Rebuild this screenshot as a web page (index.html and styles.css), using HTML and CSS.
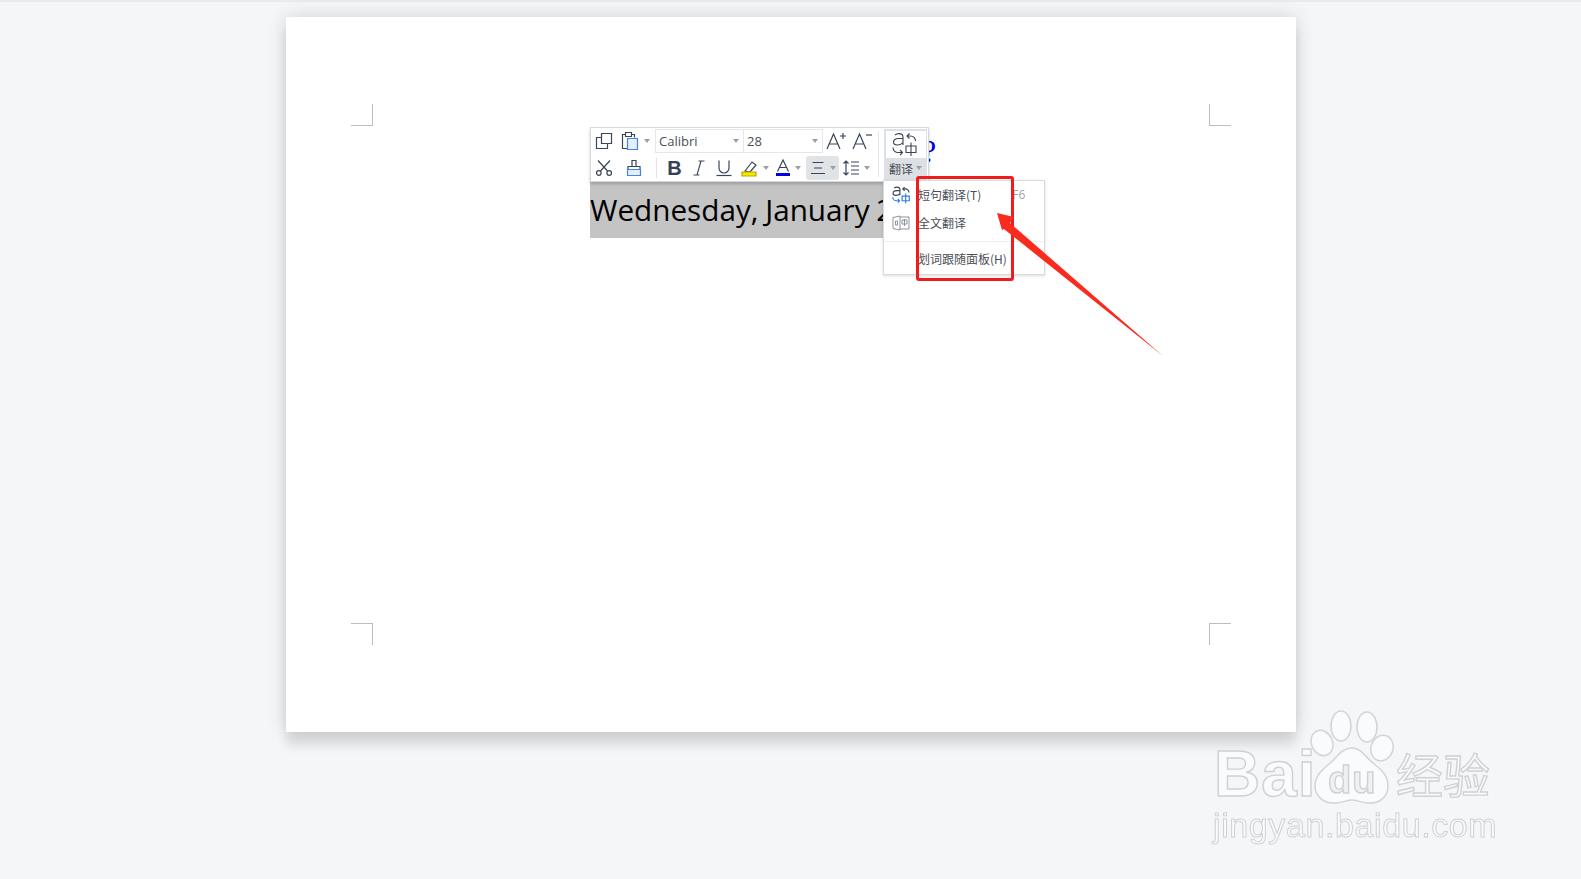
FILE: index.html
```html
<!DOCTYPE html>
<html lang="zh-CN">
<head>
<meta charset="utf-8">
<title>翻译</title>
<link rel="stylesheet" href="styles.css">
</head>
<body>
<div class="topline"></div>
<main class="workspace">
  <section class="sheet">
    <i class="crop crop-tl"></i><i class="crop crop-tr"></i><i class="crop crop-bl"></i><i class="crop crop-br"></i>
    <div class="selection">Wednesday, January 2</div>
    <span class="stray">?</span>

    <div class="toolbar">
      <div class="tools">
        <div class="row">
          <button class="tool w26"><svg width="18" height="18" viewBox="0 0 18 18" class="ic"><path d="M6.500 1.500h10v10h-10z"/><path d="M6.500 5.500h-5v11h11v-5"/></svg></button>
          <button class="tool w35"><svg width="20" height="20" viewBox="0 0 20 20" class="ic"><path d="M5.500 3.500h-3v14h5"/><path d="M5.500 1.500h6v4h-6zM11.500 3.500h3v3"/><path class="blue" d="M7.500 7.500h10v11h-10z"/></svg><b class="caret"></b></button>
          <div class="combo">
            <span class="combo-font">Calibri<b class="caret"></b></span>
            <span class="combo-size">28<b class="caret"></b></span>
          </div>
          <button class="tool w26"><svg width="24" height="20" viewBox="0 0 24 20" class="ic"><path d="M3 18 9.500 3l6.500 15M5.500 13h8"/><path d="M16 5h6M19 2v6"/></svg></button>
          <button class="tool w25"><svg width="24" height="20" viewBox="0 0 24 20" class="ic"><path d="M3 18 9.500 3l6.500 15M5.500 13h8"/><path d="M16 4h6"/></svg></button>
        </div>
        <div class="row row2">
          <button class="tool w26"><svg width="18" height="18" viewBox="0 0 18 18" class="ic"><path d="M3 1.500 12.500 12M15 1.500 5.500 12"/><circle cx="3.800" cy="14" r="2.300"/><circle cx="14.200" cy="14" r="2.300"/></svg></button>
          <button class="tool w34"><svg width="16" height="18" viewBox="0 0 16 18" class="ic"><path d="M6 1.500h4v6H6zM2 7.500h12v3H2z"/><path class="blue" d="M1.500 10.500h13v6h-13z"/></svg></button>
          <i class="vsep"></i>
          <button class="tool w29 bold">B</button>
          <button class="tool w20"><svg width="12" height="16" viewBox="0 0 12 16" class="ic thin"><path d="M4 15 8 1M5.500 1h6M.500 15h6"/></svg></button>
          <button class="tool w30"><svg width="18" height="18" viewBox="0 0 18 18" class="ic"><path d="M4 1.500V9a5 5 0 0 0 10 0V1.500"/><path d="M1.500 16.500h15"/></svg></button>
          <button class="tool w32"><svg width="18" height="18" viewBox="0 0 18 18" class="ic"><path d="M4 12 11 3l4 3-6 7z"/><path class="mark" d="M1 13h14v4H1z"/></svg><b class="caret"></b></button>
          <button class="tool w33"><svg width="16" height="18" viewBox="0 0 16 18" class="ic"><path d="M2.500 12.500 8 1l5.500 11.500M4.500 8.500h7"/><path class="bar" d="M1 14h14v3H1z"/></svg><b class="caret"></b></button>
          <button class="tool w33 active"><svg width="16" height="14" viewBox="0 0 16 14" class="ic"><path d="M2.500 1.500h11M4 7h8M1 12.500h14"/></svg><b class="caret"></b></button>
          <button class="tool w33"><svg width="18" height="18" viewBox="0 0 18 18" class="ic"><path d="M4 2v14M1.500 4.500 4 2l2.500 2.500M1.500 13.500 4 16l2.500-2.500M9 3h8M9 7h8M9 11h8M9 15h8"/></svg><b class="caret"></b></button>
        </div>
      </div>
      <i class="hsep"></i>
      <div class="translate">
        <span class="translate-icon"><svg width="25" height="25" viewBox="0 0 25 25" class="ic thin"><path d="M3 3C4 2 5.500 1.600 7 1.600c2.500 0 4 1.300 4 3.600V13M11 6.500H6.500C3.500 6.500 1.500 7.800 1.500 10s1.800 3 4 3c2 0 4-.700 5.500-2.500"/><path d="M23.500 9a5 5 0 0 0-5-5H15M17.500 1.500 15 4l2.500 2.500"/><path d="M1 15.500a5 5 0 0 0 5 5h4M8 18l2.500 2.500L8 23"/><path d="M14 14h10v6.500H14zM19 10.500V24"/></svg></span>
        <span class="translate-label">翻译<b class="caret"></b></span>
      </div>
    </div>

    <div class="menu">
      <div class="item"><span class="item-ic"><svg width="18" height="18" viewBox="0 0 25 25" class="ic han"><path d="M3 3C4 2 5.500 1.600 7 1.600c2.500 0 4 1.300 4 3.600V13M11 6.500H6.500C3.500 6.500 1.500 7.800 1.500 10s1.800 3 4 3c2 0 4-.700 5.500-2.500"/><path d="M23.500 9a5 5 0 0 0-5-5H15M17.500 1.500 15 4l2.500 2.500"/><path class="bluehan" d="M1 15.500a5 5 0 0 0 5 5h4M8 18l2.500 2.500L8 23"/><path class="bluehan" d="M14 14h10v6.500H14zM19 10.500V24"/></svg></span><span class="item-t">短句翻译(T)</span><span class="item-key">F6</span></div>
      <div class="item"><span class="item-ic"><svg width="18" height="16" viewBox="0 0 18 16" class="ic grey"><path d="M1 2.500 8 1v14l-7-1.500zM8 2h9v12H8"/><path d="M3.500 6h2v4h-2zM10 5h5v4h-5zM12.500 4v7"/></svg></span><span class="item-t">全文翻译</span></div>
      <i class="menu-sep"></i>
      <div class="item"><span class="item-ic"></span><span class="item-t">划词跟随面板(H)</span></div>
    </div>

    <div class="redbox"></div>
    <svg class="arrow" width="170" height="145" viewBox="0 0 170 145"><polygon points="1,1 18,5 14,11 167,144 8,17 6,18"/></svg>
  </section>
</main>

<aside class="mark-wm">
  <svg class="paw" width="84" height="96" viewBox="0 0 84 96">
    <ellipse cx="12" cy="33" rx="10.500" ry="13" transform="rotate(-25 12 33)"/>
    <ellipse cx="31" cy="16" rx="10" ry="15"/>
    <ellipse cx="57" cy="17" rx="10" ry="15"/>
    <ellipse cx="72" cy="38" rx="11" ry="13" transform="rotate(20 72 38)"/>
    <path d="M42 38c10 0 14 10 22 16 8 6 14 12 14 22 0 12-10 18-20 17-6 0-11-3-16-3s-10 3-16 3C16 94 5 88 5 76c0-10 7-16 14-22 8-6 12-16 23-16z"/>
  </svg>
  <span class="wm-bai">Bai</span>
  <span class="wm-du">du</span>
  <span class="wm-cn">经验</span>
  <span class="wm-url">jingyan.baidu.com</span>
</aside>
</body>
</html>
```
FILE: styles.css
```css
* { box-sizing: border-box; }
html, body { margin: 0; height: 100%; }
body {
  width: 1581px;
  height: 879px;
  overflow: hidden;
  background: #f5f6f8;
  position: relative;
  font-family: "Noto Sans CJK SC", "Noto Sans", sans-serif;
}
.topline { height: 2px; background: #e9eaec; }
.workspace { display: flex; justify-content: center; padding: 15px 0 0 1px; }
.sheet {
  position: relative;
  width: 1010px;
  height: 715px;
  background: #fff;
  box-shadow: 0 0 18px rgba(0, 0, 0, .15), 0 14px 10px rgba(0, 0, 0, .09);
}

/* crop marks */
.crop { position: absolute; width: 22px; height: 22px; border: 0 solid #bdbdbd; }
.crop-tl { left: 65px; top: 87px; border-right-width: 1px; border-bottom-width: 1px; }
.crop-tr { left: 923px; top: 87px; border-left-width: 1px; border-bottom-width: 1px; }
.crop-bl { left: 65px; top: 606px; border-right-width: 1px; border-top-width: 1px; }
.crop-br { left: 923px; top: 606px; border-left-width: 1px; border-top-width: 1px; }

/* selected text */
.selection {
  position: absolute;
  left: 304px;
  top: 165px;
  width: 304px;
  height: 56px;
  background: #c4c4c4;
  color: #000;
  font-family: "Open Sans", sans-serif;
  font-size: 29.7px;
  word-spacing: -1px;
  line-height: 56px;
  white-space: nowrap;
}
.stray {
  position: absolute;
  left: 636px;
  top: 114px;
  color: #0000e0;
  font: 32px/40px "Liberation Serif", serif;
}

/* floating toolbar */
.toolbar {
  position: absolute;
  left: 304px;
  top: 110px;
  width: 339px;
  height: 55px;
  background: #fff;
  border: 1px solid #d6d8da;
  box-shadow: 0 2px 3px rgba(0, 0, 0, .2);
  display: flex;
}
.tools { width: 287px; display: flex; flex-direction: column; }
.row { height: 26px; display: flex; align-items: center; }
.row2 { height: 27px; }
.tool {
  height: 24px;
  padding: 0;
  border: 0;
  background: none;
  display: flex;
  align-items: center;
  justify-content: center;
  gap: 4px;
  flex: none;
}
.w20 { width: 20px; } .w25 { width: 25px; } .w26 { width: 26px; } .w29 { width: 29px; }
.w30 { width: 30px; } .w32 { width: 32px; } .w33 { width: 33px; } .w34 { width: 34px; } .w35 { width: 35px; }
.active { margin-left: 2px; background: #e1e4e7; border-radius: 3px; }
.bold { font: bold 20px/24px "Liberation Sans", sans-serif; color: #33405a; }
.ic { fill: none; stroke: #3b4558; stroke-width: 1.2; flex: none; }
.ic.thin { stroke-width: 1.1; }
.ic.han { stroke-width: 1.6; }
.ic.grey { stroke: #8d939c; stroke-width: 1; }
.ic .blue { stroke: #3f86e8; fill: #e4eefc; }
.ic .mark { fill: #f7e700; stroke: #b5a900; }
.ic .bar { fill: #0000e6; stroke: none; }
.ic .bluehan { stroke: #2f7de8; }
.caret {
  display: inline-block;
  width: 0;
  height: 0;
  border: 3px solid transparent;
  border-top: 4px solid #9aa0a8;
  border-bottom: 0;
  flex: none;
}
.vsep { width: 1px; height: 20px; margin: 0 3px 0 5px; background: #e3e5e7; flex: none; }
.combo {
  width: 168px;
  height: 24px;
  margin-left: 3px;
  border: 1px solid #e6e7e9;
  display: flex;
  flex: none;
  font: 13px/22px "Open Sans", sans-serif;
  color: #4a4f58;
}
.combo-font, .combo-size {
  display: flex;
  align-items: center;
  justify-content: space-between;
  padding: 0 4px 0 3px;
}
.combo-font { width: 88px; border-right: 1px solid #e6e7e9; }
.combo-size { width: 78px; }
.hsep { width: 1px; height: 46px; margin: 3px 5px 0 0; background: #e3e5e7; flex: none; }
.translate {
  width: 43px;
  margin-top: 1px;
  background: #dde0e4;
  display: flex;
  flex-direction: column;
  align-items: center;
}
.translate-icon {
  width: 40px;
  height: 27px;
  margin-top: 2px;
  padding-right: 3px;
  background: #fff;
  display: flex;
  align-items: center;
  justify-content: center;
}
.translate-label {
  height: 20px;
  display: flex;
  align-items: center;
  gap: 3px;
  font-size: 12px;
  color: #4a4f58;
}

/* dropdown menu */
.menu {
  position: absolute;
  left: 597px;
  top: 163px;
  width: 162px;
  height: 95px;
  background: #fff;
  border: 1px solid #d8dadc;
  box-shadow: 0 1px 3px rgba(0, 0, 0, .15);
  font-size: 12px;
  color: #4b4f56;
}
.item { height: 27px; display: flex; align-items: center; }
.item + .item { margin-top: 1px; }
.item-ic { width: 34px; display: flex; justify-content: center; flex: none; }
.item-key { margin-left: 31px; color: #9ea3aa; font-family: "Open Sans", sans-serif; }
.menu-sep { display: block; height: 1px; margin: 5px 0 3px; background: #eeeff1; }

/* annotation */
.redbox {
  position: absolute;
  left: 630px;
  top: 159px;
  width: 98px;
  height: 105px;
  border: 3px solid #f01c1c;
  border-radius: 3px;
}
.arrow { position: absolute; left: 710px; top: 195px; }
.arrow polygon { fill: #fb2a1e; }

/* watermark */
.mark-wm { position: absolute; left: 1200px; top: 705px; width: 310px; height: 150px; filter: blur(.6px); }
.paw { position: absolute; left: 110px; top: 5px; fill: #fafbfc; stroke: #d2d4d7; stroke-width: 1.5; }
.wm-bai, .wm-du, .wm-cn, .wm-url {
  position: absolute;
  color: #fafbfc;
  -webkit-text-stroke: 1.4px #cfd1d4;
  white-space: nowrap;
}
.wm-bai { left: 14px; top: 33px; font: bold 64px/72px "Liberation Sans", sans-serif; letter-spacing: 1px; }
.wm-du { left: 128px; top: 53px; font: bold 38px/44px "Liberation Sans", sans-serif; letter-spacing: 1px; color: #f0f1f3; }
.wm-cn { left: 196px; top: 37px; font: 47px/62px "Noto Sans CJK SC", sans-serif; }
.wm-url { left: 13px; top: 100px; font: 34px/40px "Liberation Sans", sans-serif; letter-spacing: .6px; -webkit-text-stroke-width: 1px; }
```
